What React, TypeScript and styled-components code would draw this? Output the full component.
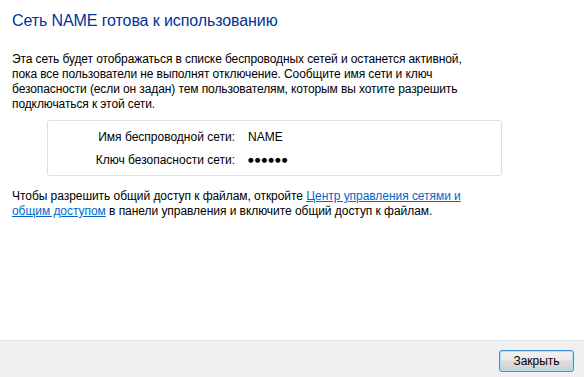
import styled, { createGlobalStyle } from "styled-components";

const GlobalStyle = createGlobalStyle`
  html, body {
    margin: 0;
    padding: 0;
    background: #fff;
  }
  body {
    font-family: "Liberation Sans", "DejaVu Sans", sans-serif;
    font-size: 12px;
    color: #000;
  }
`;

export default function App() {
  return (
    <>
      <GlobalStyle />
      <Dialog>
        <Content>
          <Title>Сеть NAME готова к использованию</Title>
          <Text>
            Эта сеть будет отображаться в списке беспроводных сетей и останется активной,
            <br />
            пока все пользователи не выполнят отключение. Сообщите имя сети и ключ
            <br />
            безопасности (если он задан) тем пользователям, которым вы хотите разрешить
            <br />
            подключаться к этой сети.
          </Text>
          <InfoBox>
            <Label>Имя беспроводной сети:</Label>
            <Value>NAME</Value>
            <Label>Ключ безопасности сети:</Label>
            <Dots>●●●●●●</Dots>
          </InfoBox>
          <ShareText>
            Чтобы разрешить общий доступ к файлам, откройте{" "}
            <Link href="#">Центр управления сетями и</Link>
            <br />
            <Link href="#">общим доступом</Link> в панели управления и включите общий доступ к файлам.
          </ShareText>
        </Content>
        <Footer>
          <Button>Закрыть</Button>
        </Footer>
      </Dialog>
    </>
  );
}

const Dialog = styled.div`
  width: 584px;
  height: 377px;
  display: flex;
  flex-direction: column;
  overflow: hidden;
`;
const Content = styled.div`
  flex: 1;
  padding: 11px 12px 0 12px;
`;
const Title = styled.h1`
  margin: 0;
  font-size: 16px;
  font-weight: normal;
  line-height: 20px;
  letter-spacing: -0.1px;
  color: #003399;
`;
const Text = styled.p`
  margin: 21px 0 0 0;
  line-height: 15px;
  letter-spacing: -0.1px;
  white-space: nowrap;
`;
const InfoBox = styled.div`
  box-sizing: border-box;
  width: 455px;
  height: 56px;
  margin: 8px 0 0 35px;
  padding: 5px 0 3px 0;
  border: 1px solid #d9e1e7;
  border-radius: 3px;
  display: grid;
  grid-template-columns: 187px 1fr;
  grid-auto-rows: 23px;
  column-gap: 13px;
  align-items: center;
`;
const Label = styled.div`
  text-align: right;
  line-height: 23px;
`;
const Value = styled.div`
  line-height: 23px;
`;
const Dots = styled.div`
  font-family: "DejaVu Sans", sans-serif;
  font-size: 6.5px;
  letter-spacing: 1.1px;
  line-height: 23px;
`;
const ShareText = styled.p`
  margin: 13px 0 0 0;
  line-height: 15px;
  letter-spacing: -0.05px;
  white-space: nowrap;
`;
const Link = styled.a`
  color: #0066cc;
  text-decoration: underline;
`;
const Footer = styled.div`
  height: 37px;
  border-top: 1px solid #dfdfdf;
  background: #f0f0f0;
  display: flex;
  justify-content: flex-end;
  align-items: flex-start;
  padding: 9px 10px 0 0;
  box-sizing: border-box;
  flex-shrink: 0;
`;
const Button = styled.button`
  box-sizing: border-box;
  width: 75px;
  height: 22px;
  padding: 0;
  border: 1px solid #3c8fd0;
  border-radius: 3px;
  background: linear-gradient(to bottom, #f2f2f2 0%, #ebebeb 45%, #dddddd 50%, #cfcfcf 100%);
  box-shadow: inset 0 0 0 1px #aee0f8;
  font-family: "Liberation Sans", "DejaVu Sans", sans-serif;
  font-size: 12px;
  color: #000;
`;
